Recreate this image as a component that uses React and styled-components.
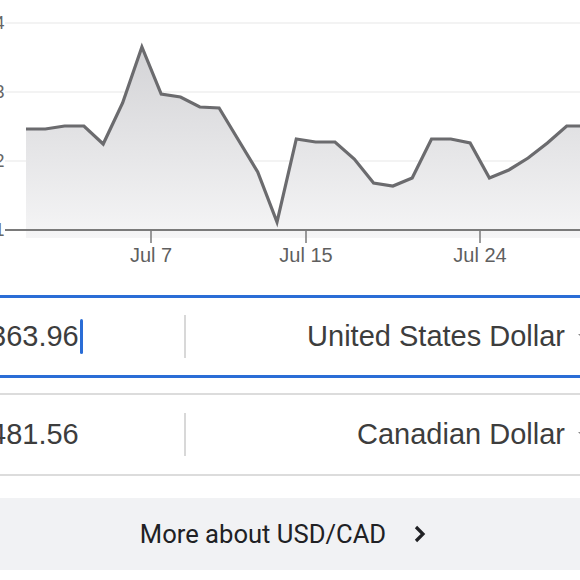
import styled, { createGlobalStyle } from "styled-components";

const GlobalStyle = createGlobalStyle`
  html, body {
    margin: 0;
    padding: 0;
    background: #ffffff;
    overflow: hidden;
  }
`;

// the screenshot is a crop: the page starts 40px left of the visible area
const OFFSET = 40;

const rate = [
  129, 129, 126, 126, 144, 103, 47, 94, 97, 107, 108, 140, 172, 222, 139,
  142, 142, 159, 183, 186, 178, 139, 139, 143, 178, 170, 158, 143, 126, 126,
];

const yTicks = [
  { label: "1.34", y: 23 },
  { label: "1.33", y: 92 },
  { label: "1.32", y: 161 },
];

const xTicks = [
  { label: "Jul 7", x: 151 },
  { label: "Jul 15", x: 306 },
  { label: "Jul 24", x: 480 },
];

const Page = styled.div`
  width: 640px;
  margin-left: -${OFFSET}px;
  font-family: "Liberation Sans", Arial, sans-serif;
`;

const ChartSvg = styled.svg`
  display: block;
`;

const Converter = styled.div`
  display: flex;
  flex-direction: column;
  gap: 15px;
`;

const Row = styled.div`
  display: flex;
  align-items: center;
  height: 83px;
  box-sizing: border-box;
  border-top: ${(p) => (p.$focused ? "3px solid #2a6dd6" : "2px solid #dcdcdc")};
  border-bottom: ${(p) => (p.$focused ? "3px solid #2a6dd6" : "2px solid #dcdcdc")};
  color: #3d3d3d;
  font-size: 29px;
`;

const Amount = styled.div`
  width: 224px;
  box-sizing: border-box;
  padding-left: 30px;
  display: flex;
  align-items: center;
`;

const Cursor = styled.span`
  display: inline-block;
  width: 3px;
  height: 35px;
  margin-left: 1px;
  border-radius: 2px;
  background: #2a6dd6;
`;

const Divider = styled.div`
  width: 1.5px;
  height: 43px;
  background: #d8d8d8;
`;

const Currency = styled.div`
  flex: 1;
  display: flex;
  align-items: center;
  justify-content: flex-end;
  padding-right: 12px;
`;

const DropArrow = styled.span`
  margin-left: 13px;
  width: 0;
  height: 0;
  border-left: 5px solid transparent;
  border-right: 5px solid transparent;
  border-top: 5px solid #8a8a8a;
`;

const MoreButton = styled.div`
  margin-top: 22px;
  height: 72px;
  background: #f1f2f4;
  display: flex;
  align-items: center;
  justify-content: center;
  gap: 25px;
  padding-left: 7px;
  font-family: Roboto, "Liberation Sans", sans-serif;
  font-size: 25.6px;
  color: #202124;
`;

const Chart = () => {
  const pts = rate.map((y, i) => [26 + i * 19.31 + OFFSET, y]);
  const line = pts.map(([x, y]) => `${x.toFixed(1)},${y}`).join(" ");
  const area = `${pts[0][0]},238 ${line} ${pts[pts.length - 1][0]},238`;

  return (
    <ChartSvg width="640" height="295" viewBox="0 0 640 295">
      <defs>
        <linearGradient id="fill" x1="0" y1="47" x2="0" y2="238" gradientUnits="userSpaceOnUse">
          <stop offset="0" stopColor="#d3d3d6" />
          <stop offset="1" stopColor="#f5f5f6" />
        </linearGradient>
      </defs>
      {yTicks.map((t) => (
        <line key={t.label} x1={45} x2={640} y1={t.y} y2={t.y} stroke="#efefef" strokeWidth="1.5" />
      ))}
      <polygon points={area} fill="url(#fill)" />
      <polyline points={line} fill="none" stroke="#6b6b6e" strokeWidth="3.2" strokeLinejoin="miter" />
      <line x1={45} x2={640} y1={230} y2={230} stroke="#7a7a7a" strokeWidth="2" />
      {[...yTicks, { label: "1.31", y: 230 }].map((t) => (
        <text
          key={t.label}
          x={44.5}
          y={t.y + 6}
          textAnchor="end"
          fontFamily="Liberation Sans, Arial, sans-serif"
          fontSize="18"
          fill="#666"
        >
          {t.label}
        </text>
      ))}
      {xTicks.map((t) => (
        <g key={t.label}>
          <line x1={t.x + OFFSET} x2={t.x + OFFSET} y1={230} y2={243} stroke="#7a7a7a" strokeWidth="1.5" />
          <text
            x={t.x + OFFSET}
            y={262}
            textAnchor="middle"
            fontFamily="Liberation Sans, Arial, sans-serif"
            fontSize="20"
            fill="#5f5f5f"
          >
            {t.label}
          </text>
        </g>
      ))}
    </ChartSvg>
  );
};

const Chevron = () => (
  <svg width="16" height="20" viewBox="0 0 16 20">
    <polyline points="5,3 12,10 5,17" fill="none" stroke="#202124" strokeWidth="3.2" />
  </svg>
);

const App = () => {
  return (
    <Page>
      <GlobalStyle />
      <Chart />
      <Converter>
        <Row $focused>
          <Amount>
            363.96
            <Cursor />
          </Amount>
          <Divider />
          <Currency>
            United States Dollar
            <DropArrow />
          </Currency>
        </Row>
        <Row>
          <Amount>481.56</Amount>
          <Divider />
          <Currency>
            Canadian Dollar
            <DropArrow />
          </Currency>
        </Row>
      </Converter>
      <MoreButton>
        More about USD/CAD
        <Chevron />
      </MoreButton>
    </Page>
  );
};

export default App;
